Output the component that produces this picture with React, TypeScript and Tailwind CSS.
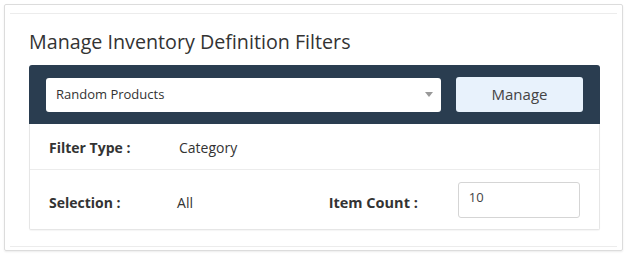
export default function App() {
  return (
    <div className="w-[627px] h-[257px] bg-white p-[4px] font-['Open_Sans',sans-serif]">
      <div className="h-[247px] w-[619px] border border-[#dcdcdc] rounded-[2px] shadow-[0_1px_2px_rgba(0,0,0,0.08)] px-[5px] pt-[8px] pb-[3px]">
        <div className="h-full border-t border-b border-[#ececec] px-[19px]">
          <h2 className="pt-[15px] text-[19.7px] leading-[26px] text-[#333]">Manage Inventory Definition Filters</h2>
          <div className="mt-[10px] w-[571px]">
            <div className="bg-[#2a3d50] rounded-t-[3px] h-[59px] flex items-center px-[17px] gap-[15px]">
              <div className="relative bg-white rounded-[3px] h-[34px] w-[395px] flex items-center pl-[10px]">
                <span className="text-[13px] text-[#333]">Random Products</span>
                <span className="absolute right-[8px] top-[14px] w-0 h-0 border-l-[4px] border-r-[4px] border-t-[5px] border-l-transparent border-r-transparent border-t-[#999]"></span>
              </div>
              <button className="bg-[#e8f2fc] rounded-[3px] h-[35px] w-[127px] text-[15px] text-[#444] flex items-center justify-center">
                Manage
              </button>
            </div>
            <div className="border border-t-0 border-[#e6e6e6] rounded-b-[2px] shadow-[0_1px_1px_rgba(0,0,0,0.04)]">
              <div className="h-[46px] flex items-center px-[19px] pt-[2px] border-b border-[#ececec] text-[14px] text-[#333]">
                <span className="w-[130px] font-bold">Filter Type :</span>
                <span>Category</span>
              </div>
              <div className="h-[59px] flex items-center px-[19px] text-[14px] text-[#333]">
                <span className="w-[130px] font-bold pt-[6px]">Selection :</span>
                <span className="w-[154px] pt-[6px]">All</span>
                <span className="w-[131px] font-bold text-[14.5px] pt-[6px]">Item Count :</span>
                <div className="border border-[#d5d5d5] rounded-[3px] h-[36px] w-[124px] flex items-center pl-[10px] pb-[4px] text-[13px] text-[#444]">
                  10
                </div>
              </div>
            </div>
          </div>
        </div>
      </div>
    </div>
  )
}
